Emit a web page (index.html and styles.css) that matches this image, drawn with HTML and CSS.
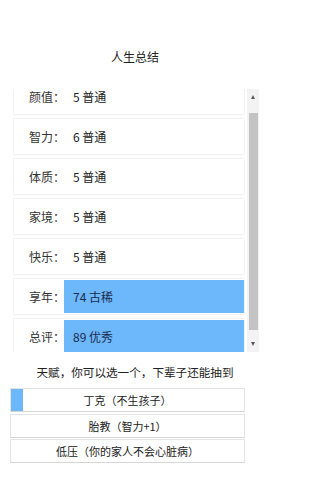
FILE: index.html
```html
<!DOCTYPE html>
<html lang="zh">
<head>
<meta charset="utf-8">
<link rel="stylesheet" href="styles.css">
</head>
<body>
<div class="page">
  <h1 class="title">人生总结</h1>
  <div class="listwrap">
    <div class="list">
      <div class="cards">
        <div class="card"><span class="label">颜值：</span><span class="value">5 普通</span></div>
        <div class="card"><span class="label">智力：</span><span class="value">6 普通</span></div>
        <div class="card"><span class="label">体质：</span><span class="value">5 普通</span></div>
        <div class="card"><span class="label">家境：</span><span class="value">5 普通</span></div>
        <div class="card"><span class="label">快乐：</span><span class="value">5 普通</span></div>
        <div class="card"><span class="label">享年：</span><span class="value hl">74 古稀</span></div>
        <div class="card"><span class="label">总评：</span><span class="value hl">89 优秀</span></div>
      </div>
    </div>
    <div class="sb">
      <span class="arrow up"></span>
      <span class="thumb"></span>
      <span class="arrow down"></span>
    </div>
  </div>
  <p class="hint">天赋，你可以选一个，下辈子还能抽到</p>
  <div class="talents">
    <div class="talent active">丁克（不生孩子）</div>
    <div class="talent">胎教（智力+1）</div>
    <div class="talent">低压（你的家人不会心脏病）</div>
  </div>
</div>
</body>
</html>
```
FILE: styles.css
```css
html, body {
  margin: 0;
  padding: 0;
  background: #fff;
}
body {
  font-family: "Noto Sans CJK SC", "Noto Sans", sans-serif;
  color: #222;
}
.page {
  width: 270px;
  height: 479px;
  overflow: hidden;
}
.title {
  margin: 0;
  padding-top: 48px;
  height: 41px;
  font-size: 12px;
  line-height: 18px;
  font-weight: normal;
  text-align: center;
  color: #222;
}
.listwrap {
  display: flex;
  height: 263px;
  padding-left: 13px;
  gap: 2px;
}
.list {
  width: 232px;
  height: 263px;
  overflow: hidden;
}
.cards {
  display: flex;
  flex-direction: column;
  gap: 5px;
  margin-top: -10px;
  padding: 0 1px;
}
.card {
  display: flex;
  height: 35px;
  background: #fff;
  box-shadow: 0 0 2px rgba(0, 0, 0, 0.16);
  font-size: 12px;
}
.label {
  width: 35px;
  padding-left: 15px;
  line-height: 35px;
  color: #333;
  white-space: nowrap;
}
.value {
  flex: 1;
  padding-left: 9px;
  line-height: 33px;
  margin: 1px 0;
  color: #222;
}
.value.hl {
  background: #6db7fb;
  color: #1b2c4e;
}
.sb {
  width: 12px;
  height: 263px;
  box-sizing: border-box;
  padding: 6px 0;
  background: #f3f3f3;
  display: flex;
  flex-direction: column;
  align-items: center;
}
.arrow {
  width: 0;
  height: 0;
  border-left: 2.5px solid transparent;
  border-right: 2.5px solid transparent;
}
.arrow.up {
  border-bottom: 4px solid #5a5a5a;
}
.arrow.down {
  margin-top: 12px;
  border-top: 4px solid #5a5a5a;
}
.thumb {
  margin-top: 14px;
  width: 9px;
  height: 217px;
  background: #c3c3c3;
}
.hint {
  margin: 12px 0 0;
  font-size: 11.6px;
  line-height: 16px;
  text-align: center;
  color: #222;
}
.talents {
  margin: 8px 0 0 10px;
  width: 235px;
  display: flex;
  flex-direction: column;
  gap: 1.5px;
}
.talent {
  height: 24px;
  box-sizing: border-box;
  border: 1px solid #e4e4e4;
  border-bottom-color: #d6d6d6;
  font-size: 11px;
  line-height: 22px;
  text-align: center;
  color: #222;
  background: #fff;
}
.talent.active {
  background: linear-gradient(to right, #6db7fb 12px, #fff 12px);
  background-clip: padding-box;
}
```
